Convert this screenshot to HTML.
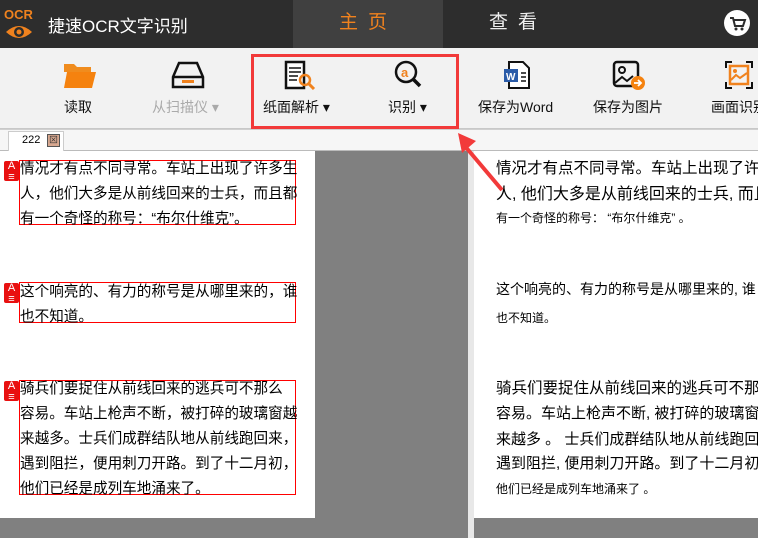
<!DOCTYPE html>
<html><head><meta charset="utf-8">
<style>
*{margin:0;padding:0;box-sizing:border-box}
body{width:758px;height:538px;overflow:hidden;position:relative;background:#808080;font-family:"Liberation Sans","Noto Sans CJK SC",sans-serif}
.abs{position:absolute}
.top{left:0;top:0;width:758px;height:48px;background:#2d2d2d}
.tab1{left:293px;top:0;width:150px;height:48px;background:#404040;color:#f0821e;font-size:19px;text-align:center;line-height:46px;letter-spacing:10px}
.tab2{left:443px;top:0;width:150px;height:48px;color:#eee;font-size:19px;text-align:center;line-height:46px;letter-spacing:10px}
.title{left:48px;top:12px;color:#fff;font-size:17px}
.bar{left:0;top:48px;width:758px;height:81px;background:#f2f2f2;border-bottom:1px solid #c8c8c8}
.lbl{font-size:14px;color:#111;white-space:nowrap}
.strip{left:0;top:129px;width:758px;height:22px;background:#f6f6f6;border-bottom:1px solid #bbb}
.pl{left:0;top:151px;width:315px;height:367px;background:#fff}
.pr{left:474px;top:151px;width:284px;height:367px;background:#fff}
.div{left:468px;top:151px;width:6px;height:387px;background:#e8e8e8}
.t{font-family:"Liberation Sans","Noto Sans CJK SC",sans-serif;font-size:14.6px;color:#000;white-space:nowrap;letter-spacing:0}
.box{border:1px solid #f00}
.ic{width:15px;height:20px;background:#e81010;border-radius:2px;color:#fff;font-size:11px;text-align:center;line-height:11px}
.r{font-family:"Liberation Sans","Noto Sans CJK SC",sans-serif;color:#000;white-space:nowrap}
</style></head><body>
<div class="abs top"></div>
<svg class="abs" style="left:3px;top:5px" width="34" height="36" viewBox="0 0 34 36">
<text x="1" y="14" font-family="Liberation Sans" font-weight="bold" font-size="13" fill="#f0821e">OCR</text>
<path d="M3 27 Q16 15 29 27 Q16 39 3 27Z" fill="#f0821e"/>
<circle cx="16" cy="27" r="5" fill="#2d2d2d"/><circle cx="16" cy="27" r="2.5" fill="#f0821e"/>
</svg>
<div class="abs title">捷速OCR文字识别</div>
<div class="abs tab1">主页</div>
<div class="abs tab2">查看</div>
<svg class="abs" style="left:723px;top:9px" width="28" height="28"><circle cx="14" cy="14" r="13" fill="#fff"/>
<path d="M7 9h3l2 8h8l2-6H11" fill="none" stroke="#2d2d2d" stroke-width="2"/><circle cx="13" cy="20" r="1.5" fill="#2d2d2d"/><circle cx="19" cy="20" r="1.5" fill="#2d2d2d"/></svg>

<div class="abs bar"></div>
<svg class="abs" style="left:63px;top:60px" width="34" height="30"><path d="M1 4h10l3 3h14v5H1z" fill="#f08c1e"/><path d="M4 12h29l-4 16H1z" fill="#f5820f"/></svg>
<div class="abs lbl" style="left:64px;top:97px">读取</div>
<svg class="abs" style="left:171px;top:61px" width="34" height="28"><path d="M8 2h18l6 14v10H2V16z" fill="none" stroke="#111" stroke-width="2.5"/><path d="M2 16h30" stroke="#111" stroke-width="2.5"/><rect x="11" y="19" width="12" height="3" fill="#f0821e"/></svg>
<div class="abs lbl" style="left:152px;top:97px;color:#aaa">从扫描仪 ▾</div>
<div class="abs" style="left:251px;top:54px;width:208px;height:75px;border:3px solid #f23a3a"></div>
<svg class="abs" style="left:284px;top:60px" width="34" height="30"><rect x="2" y="2" width="18" height="26" fill="#fff" stroke="#111" stroke-width="2.5"/><path d="M5 8h12M5 12h12M5 16h9M5 20h8" stroke="#111" stroke-width="1.5"/><circle cx="21" cy="20" r="5" fill="none" stroke="#f0821e" stroke-width="2.5"/><path d="M25 24l5 5" stroke="#f0821e" stroke-width="3"/></svg>
<div class="abs lbl" style="left:263px;top:97px">纸面解析 ▾</div>
<svg class="abs" style="left:393px;top:59px" width="32" height="32"><circle cx="13" cy="13" r="10" fill="none" stroke="#111" stroke-width="2.5"/><path d="M20 20l7 7" stroke="#111" stroke-width="3.5"/><text x="8" y="18" font-size="13" font-weight="bold" fill="#f0821e" font-family="Liberation Sans">a</text></svg>
<div class="abs lbl" style="left:388px;top:97px">识别 ▾</div>
<svg class="abs" style="left:503px;top:60px" width="32" height="30"><path d="M6 2h14l6 6v20H6z" fill="#fff" stroke="#111" stroke-width="2"/><rect x="1" y="9" width="14" height="13" fill="#2a5ba8"/><text x="3" y="20" font-size="10" fill="#fff" font-family="Liberation Sans" font-weight="bold">W</text><path d="M18 13h5M18 17h5M18 21h5" stroke="#111" stroke-width="1.5"/></svg>
<div class="abs lbl" style="left:478px;top:97px">保存为Word</div>
<svg class="abs" style="left:612px;top:60px" width="36" height="32"><rect x="2" y="2" width="24" height="24" rx="3" fill="none" stroke="#111" stroke-width="2.5"/><circle cx="10" cy="10" r="3" fill="none" stroke="#111" stroke-width="2"/><path d="M3 23l7-6 5 4 6-5" fill="none" stroke="#111" stroke-width="2"/><circle cx="26" cy="23" r="7" fill="#f5820f"/><path d="M22 23h7M26 20l3 3-3 3" stroke="#fff" stroke-width="1.8" fill="none"/></svg>
<div class="abs lbl" style="left:593px;top:97px">保存为图片</div>
<svg class="abs" style="left:725px;top:61px" width="28" height="28"><path d="M1 7V1h6M21 1h6v6M27 21v6h-6M7 27H1v-6" fill="none" stroke="#111" stroke-width="2"/><rect x="5" y="5" width="18" height="18" fill="none" stroke="#f0821e" stroke-width="2.5"/><circle cx="10" cy="10" r="2" fill="#f0821e"/><path d="M6 19l5-5 4 3 7-5" fill="none" stroke="#f0821e" stroke-width="2"/></svg>
<div class="abs lbl" style="left:711px;top:97px">画面识别</div>

<div class="abs strip"></div>
<div class="abs" style="left:0;top:129px;width:758px;height:1px;background:#d0d0d0"></div>
<div class="abs" style="left:8px;top:131px;width:56px;height:20px;background:#fff;border:1px solid #ccc;border-bottom:none;font-size:11px;padding:2px 0 0 13px">222</div>
<div class="abs" style="left:47px;top:134px;width:13px;height:13px;background:#d8a890;border:1px solid #555;font-size:9px;line-height:11px;text-align:center;color:#333">⊠</div>

<div class="abs pl"></div>
<div class="abs div"></div>
<div class="abs pr"></div>

<div class="abs box" style="left:19px;top:160px;width:277px;height:65px"></div>
<div class="abs box" style="left:19px;top:282px;width:277px;height:41px"></div>
<div class="abs box" style="left:19px;top:380px;width:277px;height:115px"></div>
<div class="abs ic" style="left:4px;top:161px">A<br>≡</div>
<div class="abs ic" style="left:4px;top:283px">A<br>≡</div>
<div class="abs ic" style="left:4px;top:381px">A<br>≡</div>

<div class="abs t" style="left:20px;top:157px;line-height:25px">情况才有点不同寻常。车站上出现了许多生<br>人，他们大多是从前线回来的士兵，而且都<br>有一个奇怪的称号：“布尔什维克”。</div>
<div class="abs t" style="left:20px;top:280px;line-height:25px">这个响亮的、有力的称号是从哪里来的，谁<br>也不知道。</div>
<div class="abs t" style="left:20px;top:377px;line-height:25px">骑兵们要捉住从前线回来的逃兵可不那么<br>容易。车站上枪声不断，被打碎的玻璃窗越<br>来越多。士兵们成群结队地从前线跑回来，<br>遇到阻拦，便用刺刀开路。到了十二月初，<br>他们已经是成列车地涌来了。</div>

<div class="abs r" style="left:496px;top:156px;font-size:15.5px">情况才有点不同寻常。车站上出现了许多生</div>
<div class="abs r" style="left:496px;top:180px;font-size:16px">人, 他们大多是从前线回来的士兵, 而且都</div>
<div class="abs r" style="left:496px;top:209px;font-size:12px">有一个奇怪的称号： “布尔什维克” 。</div>
<div class="abs r" style="left:496px;top:279px;font-size:14px">这个响亮的、有力的称号是从哪里来的, 谁</div>
<div class="abs r" style="left:496px;top:309px;font-size:12px">也不知道。</div>
<div class="abs r" style="left:496px;top:376px;font-size:15.5px">骑兵们要捉住从前线回来的逃兵可不那么</div>
<div class="abs r" style="left:496px;top:402px;font-size:15px">容易。车站上枪声不断, 被打碎的玻璃窗越</div>
<div class="abs r" style="left:496px;top:428px;font-size:15px">来越多 。 士兵们成群结队地从前线跑回来,</div>
<div class="abs r" style="left:496px;top:452px;font-size:15px">遇到阻拦, 便用刺刀开路。到了十二月初,</div>
<div class="abs r" style="left:496px;top:480px;font-size:12px">他们已经是成列车地涌来了 。</div>

<svg class="abs" style="left:450px;top:125px" width="60" height="70"><path d="M52 65L14 20" stroke="#f23a3a" stroke-width="4"/><path d="M8 8L26 16L12 28Z" fill="#f23a3a"/></svg>
</body></html>
